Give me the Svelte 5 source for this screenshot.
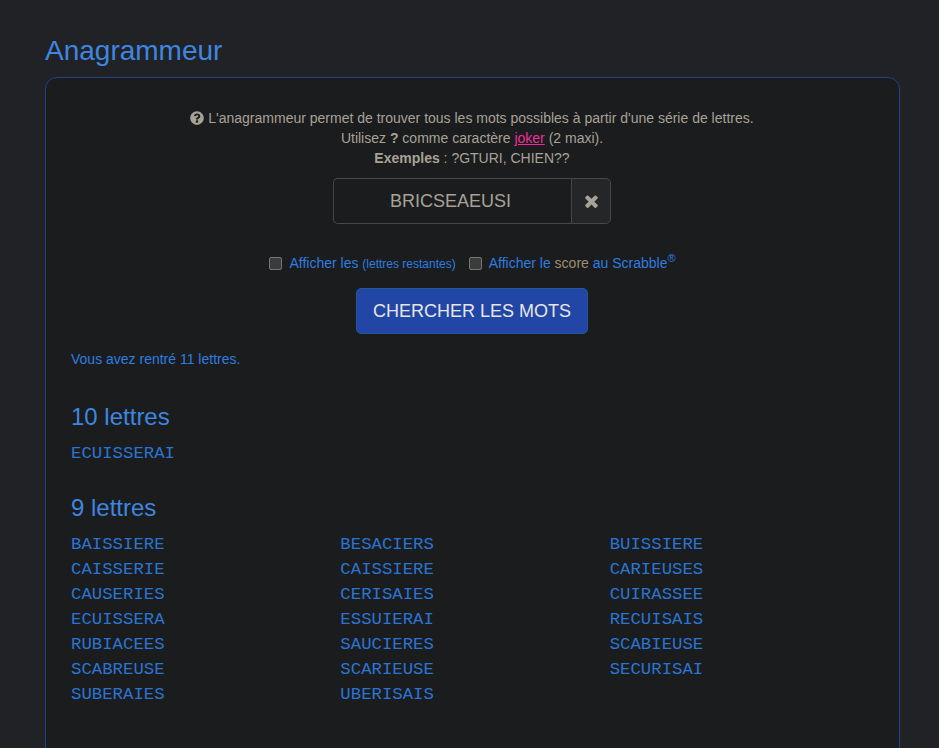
<script>
	const tenLetters = ['ECUISSERAI'];
	const nineLetters = [
		'BAISSIERE', 'BESACIERS', 'BUISSIERE',
		'CAISSERIE', 'CAISSIERE', 'CARIEUSES',
		'CAUSERIES', 'CERISAIES', 'CUIRASSEE',
		'ECUISSERA', 'ESSUIERAI', 'RECUISAIS',
		'RUBIACEES', 'SAUCIERES', 'SCABIEUSE',
		'SCABREUSE', 'SCARIEUSE', 'SECURISAI',
		'SUBERAIES', 'UBERISAIS'
	];
</script>

<main class="page">
	<h1>Anagrammeur</h1>

	<section class="card">
		<div class="intro">
			<div>
				<svg class="help" viewBox="0 0 512 512" aria-hidden="true">
					<path d="M504 256c0 136.997-111.043 248-248 248S8 392.997 8 256C8 119.083 119.043 8 256 8s248 111.083 248 248zM262.655 90c-54.497 0-89.255 22.957-116.549 63.758-3.536 5.286-2.353 12.415 2.715 16.258l34.699 26.31c5.205 3.947 12.621 3.008 16.665-2.122 17.864-22.658 30.113-35.797 57.303-35.797 20.429 0 45.698 13.148 45.698 32.958 0 14.976-12.363 22.667-32.534 33.976C247.128 238.528 216 254.941 216 296v4c0 6.627 5.373 12 12 12h56c6.627 0 12-5.373 12-12v-1.333c0-28.462 83.186-29.647 83.186-106.667 0-58.002-60.165-102-116.531-102zM256 338c-25.365 0-46 20.635-46 46 0 25.364 20.635 46 46 46s46-20.636 46-46c0-25.365-20.635-46-46-46z" />
				</svg>
				L'anagrammeur permet de trouver tous les mots possibles à partir d'une série de lettres.
			</div>
			<div>Utilisez <b>?</b> comme caractère <a href="#joker">joker</a> (2 maxi).</div>
			<div><b>Exemples</b> : ?GTURI, CHIEN??</div>
		</div>

		<div class="search">
			<input type="text" value="BRICSEAEUSI" />
			<button class="clear" type="button" aria-label="Effacer">
				<svg viewBox="300 236 1192 1320" aria-hidden="true">
					<path d="M1490 1322q0 40-28 68l-136 136q-28 28-68 28t-68-28l-294-294-294 294q-28 28-68 28t-68-28l-136-136q-28-28-28-68t28-68l294-294-294-294q-28-28-28-68t28-68l136-136q28-28 68-28t68 28l294 294 294-294q28-28 68-28t68 28l136 136q28 28 28 68t-28 68l-294 294 294 294q28 28 28 68z" />
				</svg>
			</button>
		</div>

		<div class="options">
			<label><span class="box"></span><span>Afficher les <small>(lettres restantes)</small></span></label>
			<label><span class="box"></span><span>Afficher le <span class="score">score</span> au Scrabble<sup>®</sup></span></label>
		</div>

		<div class="submit">
			<button type="button">CHERCHER LES MOTS</button>
		</div>

		<p class="count">Vous avez rentré 11 lettres.</p>

		<h2 class="first">10 lettres</h2>
		<div class="words">
			{#each tenLetters as word}
				<span>{word}</span>
			{/each}
		</div>

		<h2>9 lettres</h2>
		<div class="words">
			{#each nineLetters as word}
				<span>{word}</span>
			{/each}
		</div>
	</section>
</main>

<style>
	:global(body) {
		background: #202225;
		font-family: "Liberation Sans", Arial, sans-serif;
		overflow: hidden;
	}

	.page {
		height: 748px;
		overflow: hidden;
		padding: 33px 39px 0 45px;
		box-sizing: border-box;
	}

	h1 {
		margin: 0 0 9px;
		font-size: 28px;
		font-weight: 400;
		line-height: 35px;
		color: #3f86e0;
	}

	.card {
		border: 1px solid #21418c;
		border-radius: 12px;
		background: #1a1c1e;
		padding: 30px 26px 60px 25px;
		font-size: 14px;
		line-height: 20px;
		color: #a8a296;
	}

	.intro {
		text-align: center;
	}

	.help {
		width: 14px;
		height: 14px;
		vertical-align: -2px;
		fill: #a8a296;
	}

	a {
		color: #f02c9c;
	}

	.search {
		display: flex;
		width: 278px;
		height: 46px;
		margin: 10px auto 0;
		box-sizing: border-box;
	}

	input {
		flex: 1;
		min-width: 0;
		box-sizing: border-box;
		background: #1a1c1e;
		border: 1px solid #454749;
		border-right: 0;
		border-radius: 5px 0 0 5px;
		color: #a8a296;
		font: 18px "Liberation Sans", Arial, sans-serif;
		text-align: center;
		padding: 0 4px 0 0;
		outline: none;
	}

	.clear {
		width: 40px;
		padding: 0;
		background: #242628;
		border: 1px solid #454749;
		border-radius: 0 5px 5px 0;
		display: flex;
		align-items: center;
		justify-content: center;
	}

	.clear svg {
		width: 13px;
		height: 14px;
		fill: #a8a296;
	}

	.options {
		display: flex;
		justify-content: center;
		gap: 13px;
		margin-top: 29px;
		padding-left: 1px;
		color: #2f7de0;
	}

	label {
		display: flex;
		align-items: center;
	}

	.box {
		width: 13px;
		height: 13px;
		margin-right: 7px;
		box-sizing: border-box;
		background: #3b3b3b;
		border: 1px solid #767676;
		border-radius: 2px;
	}

	small {
		font-size: 12px;
		line-height: 0;
	}

	.score {
		color: #a08c72;
	}

	sup {
		position: relative;
		top: -6px;
		font-size: 11px;
		line-height: 0;
		vertical-align: baseline;
	}

	.submit {
		display: flex;
		justify-content: center;
		margin-top: 15px;
	}

	.submit button {
		width: 232px;
		height: 46px;
		background: #2146a6;
		border: 1px solid #21569c;
		border-radius: 5px;
		color: #e6e6e6;
		font: 18px "Liberation Sans", Arial, sans-serif;
		padding: 0;
	}

	.count {
		margin: 15px 0 0;
		color: #2f7de0;
	}

	h2 {
		margin: 28px 0 0;
		font-size: 24px;
		font-weight: 400;
		line-height: 28px;
		color: #3f86e0;
	}

	h2.first {
		margin-top: 34px;
	}

	.words {
		display: grid;
		grid-template-columns: repeat(3, 1fr);
		margin: 10px -6px 0 0;
		font-family: "Liberation Mono", "Courier New", monospace;
		font-size: 17.33px;
		line-height: 25px;
		color: #2b74d2;
	}
</style>
